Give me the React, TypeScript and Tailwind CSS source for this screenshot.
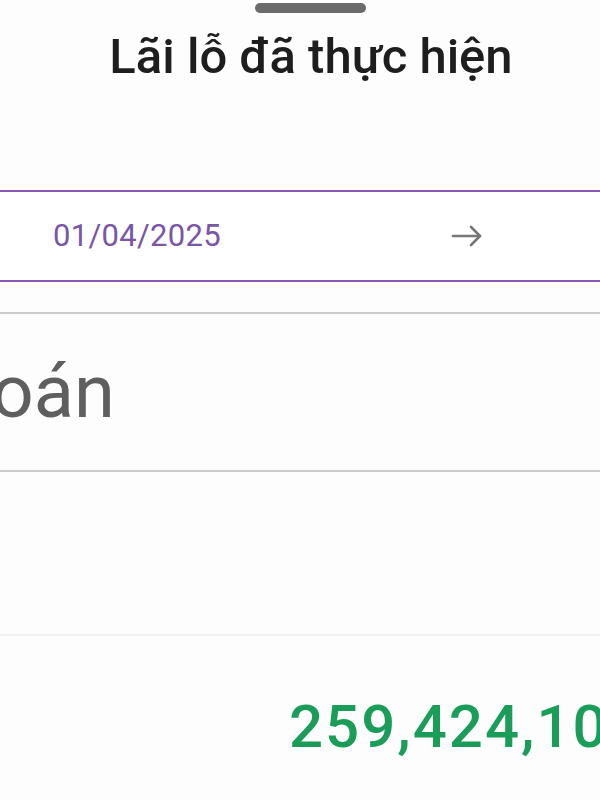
import React from 'react';

const roboto = { fontFamily: 'Roboto, "Noto Sans", sans-serif' };

export default function App() {
  return (
    <div className="w-[600px] h-[800px] overflow-hidden bg-[#fdfdfd] flex flex-col" style={roboto}>
      {/* drag handle */}
      <div className="ml-[255px] mt-[3px] h-[10px] w-[111px] rounded-full bg-[#6b6b6b]" />

      <h1 className="mt-[19px] h-[50px] pl-[22px] text-center text-[49px] leading-[50px] font-medium text-[#1e1e1e] whitespace-nowrap">
        Lãi lỗ đã thực hiện
      </h1>

      {/* date range */}
      <div className="mt-[108px] -mx-[20px] h-[92px] border-y-2 border-[#8658b3] bg-white flex items-center">
        <span className="ml-[73px] text-[31px] text-[#7a56a6] tracking-[0.3px]">01/04/2025</span>
        <span className="ml-[230px] text-[#777777]">
          <svg width="32" height="22" viewBox="0 0 32 22" fill="none" stroke="currentColor" strokeWidth="2.6" strokeLinecap="round" strokeLinejoin="round">
            <path d="M2 11h27" />
            <path d="M20 2l9 9-9 9" />
          </svg>
        </span>
      </div>

      <div className="mt-[30px] h-[2px] bg-[#cdcdcd]" />

      {/* account */}
      <div className="h-[156px] flex items-center overflow-hidden">
        <span className="-ml-[32px] text-[74px] leading-none text-[#5f5f5f] whitespace-nowrap">toán</span>
      </div>

      <div className="h-[2px] bg-[#cdcdcd]" />

      <div className="h-[162px]" />
      <div className="h-[2px] bg-[#f1f1f1]" />

      {/* realised P/L */}
      <div className="mt-[61px] pl-[289px] whitespace-nowrap overflow-hidden">
        <span className="text-[60px] leading-none font-medium tracking-[2px] text-[#1b9d5a]">259,424,100</span>
      </div>
    </div>
  );
}
